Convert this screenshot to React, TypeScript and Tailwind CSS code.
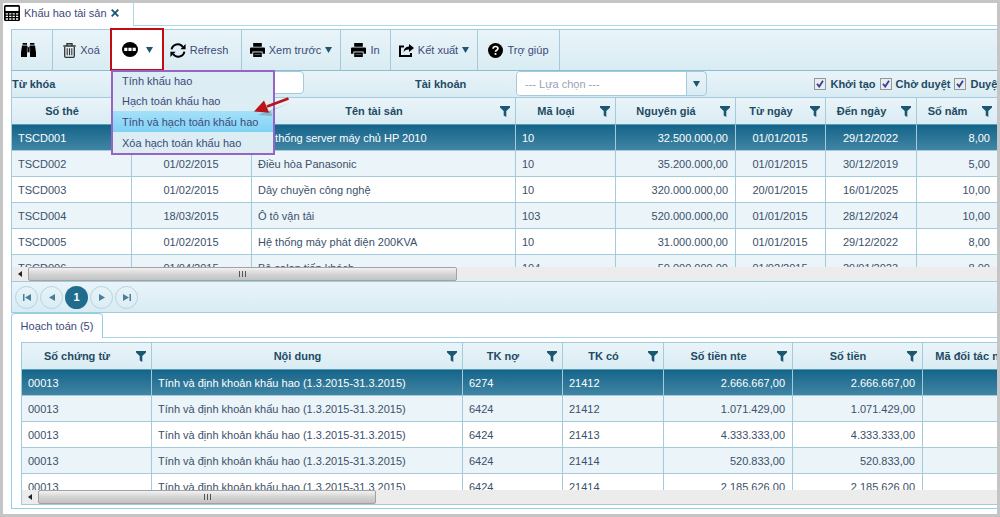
import type { ReactNode } from 'react';

type Align = 'left' | 'center' | 'right';

interface Column {
    label: string;
    width: string;
    align: Align;
}

interface GridProps {
    columns: Column[];
    rows: string[][];
    minWidth: string;
    bodyHeight: string;
    thumb: string;
}

const assetColumns: Column[] = [
    { label: 'Số thẻ', width: 'w-[120px]', align: 'left' },
    { label: '', width: 'w-[120px]', align: 'center' },
    { label: 'Tên tài sản', width: 'w-[264px]', align: 'left' },
    { label: 'Mã loại', width: 'w-[100px]', align: 'left' },
    { label: 'Nguyên giá', width: 'w-[120px]', align: 'right' },
    { label: 'Từ ngày', width: 'w-[90px]', align: 'center' },
    { label: 'Đến ngày', width: 'w-[91px]', align: 'center' },
    { label: 'Số năm', width: 'w-[80px]', align: 'right' },
];

const assetRows = [
    ['TSCD001', '01/02/2015', 'Hệ thống server máy chủ HP 2010', '10', '32.500.000,00', '01/01/2015', '29/12/2022', '8,00'],
    ['TSCD002', '01/02/2015', 'Điều hòa Panasonic', '10', '35.200.000,00', '01/01/2015', '30/12/2019', '5,00'],
    ['TSCD003', '01/02/2015', 'Dây chuyền công nghệ', '10', '320.000.000,00', '20/01/2015', '16/01/2025', '10,00'],
    ['TSCD004', '18/03/2015', 'Ô tô vận tải', '103', '520.000.000,00', '01/01/2015', '28/12/2024', '10,00'],
    ['TSCD005', '01/02/2015', 'Hệ thống máy phát điện 200KVA', '10', '31.000.000,00', '01/01/2015', '29/12/2022', '8,00'],
    ['TSCD006', '01/04/2015', 'Bộ salon tiếp khách', '104', '50.000.000,00', '01/02/2015', '29/01/2023', '8,00'],
];

const entryColumns: Column[] = [
    { label: 'Số chứng từ', width: 'w-[130px]', align: 'left' },
    { label: 'Nội dung', width: 'w-[311px]', align: 'left' },
    { label: 'TK nợ', width: 'w-[100px]', align: 'left' },
    { label: 'TK có', width: 'w-[101px]', align: 'left' },
    { label: 'Số tiền nte', width: 'w-[129px]', align: 'right' },
    { label: 'Số tiền', width: 'w-[130px]', align: 'right' },
    { label: 'Mã đối tác nợ', width: 'w-[115px]', align: 'left' },
];

const entryText = 'Tính và định khoản khấu hao (1.3.2015-31.3.2015)';

const entryRows = [
    ['00013', entryText, '6274', '21412', '2.666.667,00', '2.666.667,00', ''],
    ['00013', entryText, '6424', '21412', '1.071.429,00', '1.071.429,00', ''],
    ['00013', entryText, '6424', '21413', '4.333.333,00', '4.333.333,00', ''],
    ['00013', entryText, '6424', '21414', '520.833,00', '520.833,00', ''],
    ['00013', entryText, '6424', '21414', '2.185.626,00', '2.185.626,00', ''],
];

const menuItems = ['Tính khấu hao', 'Hạch toán khấu hao', 'Tính và hạch toán khấu hao', 'Xóa hạch toán khấu hao'];

const alignClass: Record<Align, string> = {
    left: 'text-left',
    center: 'text-center',
    right: 'text-right',
};

function Caret() {
    return (
        <svg width="7" height="6" viewBox="0 0 7 6" fill="#1c5670" aria-hidden="true">
            <path d="M0 0h7L3.5 6z" />
        </svg>
    );
}

function FilterIcon() {
    return (
        <svg className="shrink-0" width="10" height="11" viewBox="0 0 10 11" fill="#1c5670" aria-hidden="true">
            <path d="M0 0h10v1.6L6.3 5v6L3.7 9.4V5L0 1.6z" />
        </svg>
    );
}

function CalculatorIcon() {
    return (
        <svg width="16" height="16" viewBox="0 0 16 16" aria-hidden="true">
            <rect width="16" height="16" rx="1.5" fill="#000" />
            <rect x="1.5" y="1.8" width="13" height="4.2" fill="#fff" />
            <path d="M1.8 8.8h12.6M1.8 11.4h12.6M1.8 14h12.6" stroke="#fff" strokeWidth="1.3" strokeDasharray="2.2 1.2" />
        </svg>
    );
}

function BinocularsIcon() {
    return (
        <svg width="15" height="14" viewBox="0 0 15 14" fill="#000" aria-hidden="true">
            <path d="M1.6 0h4.4v1.8H1.6zM9 0h4.400v1.800H9zM1 2.400h5.200l.5 1.800h1.600l.5-1.800H14L15 9.500V14H9V9.200H6V14H0V9.500z" />
            <path d="M6.3 4.4v4.8M8.7 4.4v4.8" stroke="#dcecf4" strokeWidth=".5" />
        </svg>
    );
}

function TrashIcon() {
    return (
        <svg width="13" height="15" viewBox="0 0 13 15" fill="none" stroke="#333" aria-hidden="true">
            <path d="M.3 3h12.4M4 3V.8h5V3" strokeWidth="1.4" />
            <path d="M1.7 4v9.3q0 1 1 1h7.6q1 0 1-1V4" strokeWidth="1.3" />
            <path d="M4.2 5.3v7M6.5 5.3v7M8.8 5.3v7" strokeWidth="1.1" />
        </svg>
    );
}

function MoreIcon() {
    return (
        <svg width="16" height="15" viewBox="0 0 16 15" aria-hidden="true">
            <ellipse cx="8" cy="7.5" rx="8" ry="7.5" fill="#000" />
            <path d="M2.2 5.8h3.2v3.2H2.2zM6.4 5.8h3.2v3.2H6.4zM10.6 5.8h3.2v3.2h-3.2z" fill="#fff" />
        </svg>
    );
}

function RefreshIcon() {
    return (
        <svg width="16" height="15" viewBox="0 0 16 15" fill="none" stroke="#000" strokeWidth="2" aria-hidden="true">
            <path d="M1.6 6.4A6.2 6.2 0 0 1 12.8 4M14.4 8.6A6.2 6.2 0 0 1 3.2 11" />
            <path d="M15.6 1v5.2h-5.2zM.4 14V8.8h5.2z" fill="#000" stroke="none" />
        </svg>
    );
}

function PrintIcon() {
    return (
        <svg width="15" height="14" viewBox="0 0 15 14" fill="#000" aria-hidden="true">
            <path d="M3.2 0h8.6v3.8H3.2zM1 4.6h13q1 0 1 1v5.2h-2.4V8.6H2.4v2.2H0V5.6q0-1 1-1z" />
            <path d="M3.2 9.4h8.6V14H3.2z" />
            <path d="M4.6 11.6h5.8" stroke="#9aa" strokeWidth=".6" />
        </svg>
    );
}

function ExportIcon() {
    return (
        <svg width="15" height="13" viewBox="0 0 15 13" aria-hidden="true">
            <path d="M5 2.5H1V12h11V9" fill="none" stroke="#000" strokeWidth="2" />
            <path d="M10 0l5 4-5 4V5.6Q6 5.4 4.6 8.4 4.6 2.8 10 2.4z" fill="#000" />
        </svg>
    );
}

function HelpIcon() {
    return (
        <svg width="15" height="15" viewBox="0 0 15 15" aria-hidden="true">
            <circle cx="7.5" cy="7.5" r="7.5" fill="#000" />
            <path d="M5.1 5.8q0-2.3 2.4-2.3T9.9 5.5q0 1-1.2 1.7-1.2.6-1.2 1.6" fill="none" stroke="#fff" strokeWidth="1.7" />
            <rect x="6.6" y="10" width="1.8" height="1.8" fill="#fff" />
        </svg>
    );
}

interface ToolButtonProps {
    width: string;
    icon: ReactNode;
    label: string;
    caret?: boolean;
    hideLabel?: boolean;
}

function ToolButton({ width, icon, label, caret, hideLabel }: ToolButtonProps) {
    return (
        <button
            type="button"
            aria-label={label}
            className={`${width} flex shrink-0 items-center justify-center gap-1 border-r border-[#a3cbdc] text-[#3d4a78]`}
        >
            {icon}
            {!hideLabel && <span>{label}</span>}
            {caret && <Caret />}
        </button>
    );
}

function ActionMenu() {
    return (
        <div className="relative w-[52px] shrink-0">
            <button
                type="button"
                aria-label="Thao tác"
                aria-expanded="true"
                className="absolute -top-[2px] -left-[1px] flex h-[43px] w-[54px] items-center justify-center gap-2 border-2 border-[#c00d14] bg-white"
            >
                <MoreIcon />
                <Caret />
            </button>
            <ul className="absolute top-[40px] left-0 z-10 w-[164px] border-2 border-[#9764c6] bg-[#dcedf4] text-[#3d4a78]">
                {menuItems.map((item, i) => (
                    <li key={item} className={i === 2 ? 'bg-linear-to-b from-[#a5e0f8] to-[#7fd2f5]' : ''}>
                        <button
                            type="button"
                            className={`${i === 0 ? 'h-[18px]' : 'h-[21px]'} block w-full px-[9px] text-left whitespace-nowrap`}
                        >
                            {item}
                        </button>
                    </li>
                ))}
            </ul>
            <svg className="absolute top-[66px] left-[142px] z-20" width="40" height="24" viewBox="0 0 40 24" aria-hidden="true">
                <path d="M39 6L18 15l1 5-14-1z" fill="#000" opacity=".18" />
                <path d="M35.5 2.5L14 10.5" stroke="#b81419" strokeWidth="2.8" />
                <path d="M1 15.5L11 4.4l5.2 12.4z" fill="#b81419" />
            </svg>
        </div>
    );
}

function StatusCheck({ label }: { label: string }) {
    return (
        <label className="flex items-center gap-1 whitespace-nowrap">
            <span className="grid size-3 place-items-center">
                <input
                    type="checkbox"
                    defaultChecked
                    className="col-start-1 row-start-1 size-3 appearance-none border border-[#8e9aa0] bg-[#ececec]"
                />
                <svg className="pointer-events-none col-start-1 row-start-1" width="8" height="8" viewBox="0 0 8 8" aria-hidden="true">
                    <path d="M1 3.8L3.2 6.6 7 .8" fill="none" stroke="#353f92" strokeWidth="1.8" />
                </svg>
            </span>
            {label}
        </label>
    );
}

function DataGrid({ columns, rows, minWidth, bodyHeight, thumb }: GridProps) {
    return (
        <div className="overflow-hidden border-t border-b border-l border-[#a3cbdc]">
            <div className={`${bodyHeight} overflow-hidden`}>
                <table className={`${minWidth} w-full table-fixed border-separate border-spacing-0`}>
                    <thead>
                        <tr className="bg-linear-to-b from-[#e9f4f9] to-[#d9ecf3] text-[#1f4a63]">
                            {columns.map((col) => (
                                <th
                                    key={col.label}
                                    className={`${col.width} h-[27px] border-r border-b border-[#a3cbdc] border-b-[#5c9ab5] p-0 last:border-r-0`}
                                >
                                    <div className="flex items-center gap-2 pr-[5px] pl-1">
                                        <span className="flex-1 text-center whitespace-nowrap">{col.label}</span>
                                        <FilterIcon />
                                    </div>
                                </th>
                            ))}
                        </tr>
                    </thead>
                    <tbody>
                        {rows.map((row, r) => (
                            <tr
                                key={r}
                                className={
                                    r === 0
                                        ? 'bg-linear-to-b from-[#12658a] to-[#4186a5] text-white'
                                        : 'text-[#3c5069] odd:bg-white even:bg-[#eaf4f9]'
                                }
                            >
                                {row.map((cell, c) => (
                                    <td
                                        key={c}
                                        className={`${alignClass[columns[c].align]} h-[26px] overflow-hidden border-r border-b border-[#a3cbdc] py-0 pr-[7px] pl-[6px] whitespace-nowrap last:border-r-0`}
                                    >
                                        {cell}
                                    </td>
                                ))}
                            </tr>
                        ))}
                    </tbody>
                </table>
            </div>
            <div className="flex h-[14px] bg-[#ececec]">
                <div className="flex w-4 items-center justify-center">
                    <svg width="4" height="6" viewBox="0 0 4 6" fill="#222" aria-hidden="true">
                        <path d="M4 0v6L0 3z" />
                    </svg>
                </div>
                <div
                    className={`${thumb} flex items-center justify-center gap-[2px] rounded-xs border border-[#a2a2a2] bg-linear-to-b from-[#f2f2f2] via-[#d4d4d4] to-[#c2c2c2]`}
                >
                    <i className="h-[6px] w-px bg-[#555]" />
                    <i className="h-[6px] w-px bg-[#555]" />
                    <i className="h-[6px] w-px bg-[#555]" />
                </div>
            </div>
        </div>
    );
}

function PageButton({ label, path }: { label: string; path: string }) {
    return (
        <button
            type="button"
            aria-label={label}
            className="grid size-[23px] place-items-center rounded-full border border-[#b3d5e2]"
        >
            <svg width="8" height="7" viewBox="0 0 8 7" fill="#47809a" aria-hidden="true">
                <path d={path} />
            </svg>
        </button>
    );
}

export default function App() {
    return (
        <div className="overflow-hidden border-[3px] border-[#c5c5c5] bg-white font-['Liberation_Sans',Arial,sans-serif] text-[11px] leading-4">
            <div className="flex h-[23px]">
                <div className="flex w-[131px] shrink-0 items-center gap-1 border-r border-[#a9d6e8] pb-1 pl-px text-[#3d4a78]">
                    <CalculatorIcon />
                    <span className="whitespace-nowrap">Khấu hao tài sản</span>
                    <button type="button" aria-label="Đóng">
                        <svg width="8" height="8" viewBox="0 0 8 8" fill="none" stroke="#1c5670" strokeWidth="1.8" aria-hidden="true">
                            <path d="M.7.7l6.6 6.6M7.3.7L.7 7.3" />
                        </svg>
                    </button>
                </div>
                <div className="flex-1 border-b border-[#a9d6e8]" />
            </div>

            <main className="pt-[3px] pb-[5px] pl-2">
                <div className="flex h-[42px] border-y border-l border-[#a3cbdc] border-b-[#8cbdd0] bg-linear-to-b from-[#e9f4f9] to-[#d9ecf3]">
                    <ToolButton width="w-[41px] pr-2" icon={<BinocularsIcon />} label="Tìm kiếm" hideLabel />
                    <ToolButton width="w-[58px]" icon={<TrashIcon />} label="Xoá" />
                    <ActionMenu />
                    <ToolButton width="w-[79px] pr-1.5" icon={<RefreshIcon />} label="Refresh" />
                    <ToolButton width="w-[99px]" icon={<PrintIcon />} label="Xem trước" caret />
                    <ToolButton width="w-[50px]" icon={<PrintIcon />} label="In" />
                    <ToolButton width="w-[87px]" icon={<ExportIcon />} label="Kết xuất" caret />
                    <ToolButton width="w-[82px]" icon={<HelpIcon />} label="Trợ giúp" />
                </div>

                <div className="flex h-[26px] items-center border-l border-[#a3cbdc] bg-linear-to-b from-[#e9f4f9] to-[#d9ecf3] font-bold text-[#1f4a63]">
                    <label htmlFor="keyword" className="w-[132px] shrink-0">
                        Từ khóa
                    </label>
                    <input
                        id="keyword"
                        className="h-[23px] w-[160px] shrink-0 self-start rounded-sm border border-[#a3cbdc] bg-white px-2 font-normal"
                    />
                    <label htmlFor="account" className="w-[212px] shrink-0 pl-[111px]">
                        Tài khoản
                    </label>
                    <div className="flex h-[25px] w-[191px] shrink-0 self-start overflow-hidden rounded-sm border border-[#a3cbdc]">
                        <select
                            id="account"
                            className="flex-1 appearance-none border-r border-[#a3cbdc] bg-white px-2 font-normal text-[#9a9fb5]"
                        >
                            <option>--- Lựa chọn ---</option>
                        </select>
                        <span className="grid w-[19px] place-items-center">
                            <Caret />
                        </span>
                    </div>
                    <div className="-mr-1 ml-auto flex gap-1">
                        <StatusCheck label="Khởi tạo" />
                        <StatusCheck label="Chờ duyệt" />
                        <StatusCheck label="Duyệt" />
                    </div>
                </div>

                <DataGrid
                    columns={assetColumns}
                    rows={assetRows}
                    minWidth="min-w-[985px]"
                    bodyHeight="h-[169px]"
                    thumb="w-[429px]"
                />

                <nav
                    aria-label="Phân trang"
                    className="flex h-[31px] items-center gap-[2px] border-b border-l border-[#a3cbdc] bg-linear-to-b from-[#e9f4f9] to-[#d9ecf3] pl-[3px]"
                >
                    <PageButton label="Trang đầu" path="M0 0h1.5v7H0zM8 0v7L2 3.5z" />
                    <PageButton label="Trang trước" path="M7 0v7L1 3.5z" />
                    <button type="button" className="size-[23px] rounded-full bg-[#1f6c8f] font-bold text-white">
                        1
                    </button>
                    <PageButton label="Trang sau" path="M1 0v7l6-3.5z" />
                    <PageButton label="Trang cuối" path="M6.5 0H8v7H6.5zM0 0v7l6-3.5z" />
                </nav>

                <div role="tablist" className="flex h-[25px]">
                    <button
                        type="button"
                        role="tab"
                        aria-selected="true"
                        className="w-[92px] shrink-0 rounded-t-sm border-t border-r border-l border-[#92cfe8] text-[#3d4a78]"
                    >
                        Hoạch toán (5)
                    </button>
                    <div className="flex-1 border-b border-[#a9d6e8]" />
                </div>
                <div className="border-b border-l border-[#92cfe8] pt-1 pb-[3px] pl-[9px]">
                    <DataGrid
                        columns={entryColumns}
                        rows={entryRows}
                        minWidth="min-w-[1016px]"
                        bodyHeight="h-[147px]"
                        thumb="w-[338px]"
                    />
                </div>
            </main>
        </div>
    );
}
